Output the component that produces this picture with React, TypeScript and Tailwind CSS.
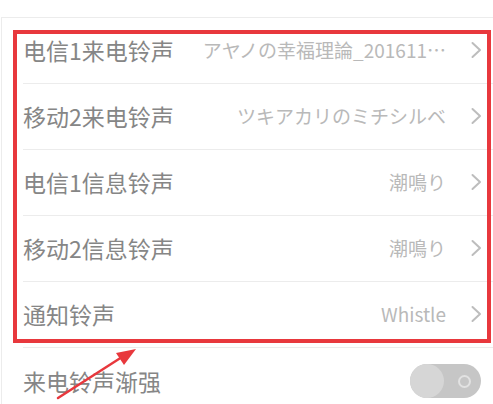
import React from "react";

const rows = [
    { label: "电信1来电铃声", value: "アヤノの幸福理論_201611…" },
    { label: "移动2来电铃声", value: "ツキアカリのミチシルベ" },
    { label: "电信1信息铃声", value: "潮鳴り" },
    { label: "移动2信息铃声", value: "潮鳴り" },
    { label: "通知铃声", value: "Whistle" },
];

const Chevron = () => (
    <svg width="13" height="18" viewBox="0 0 13 18" className="shrink-0 -mt-[2px]">
        <polyline points="2.5,2 10,9 2.5,16" fill="none" stroke="#bdbdbd" strokeWidth="2" strokeLinecap="round" strokeLinejoin="round" />
    </svg>
);

export default function App() {
    return (
        <div className="relative w-[493px] h-[404px] overflow-hidden bg-white font-['Noto_Sans_CJK_SC',sans-serif]">
            <div className="pt-[17px]">
                <div className="border-t border-l border-[#ececec] ml-[1px]">
                    {rows.map((r, i) => (
                        <div key={i} className="h-[66px] pl-[21px]">
                            <div className="h-full flex items-center border-b border-[#ececec] pr-[10px]">
                                <span className="text-[23px] text-[#868686] whitespace-nowrap">{r.label}</span>
                                <span className="flex-1 text-right text-[19px] text-[#b9b9b9] whitespace-nowrap pr-[24px] pl-[18px] truncate">
                                    {r.value}
                                </span>
                                <Chevron />
                            </div>
                        </div>
                    ))}
                    <div className="h-[66px] pl-[21px] flex items-center pr-[12px]">
                        <span className="text-[23px] text-[#868686] whitespace-nowrap flex-1">来电铃声渐强</span>
                        {/* toggle (off) */}
                        <div className="w-[71px] h-[34px] rounded-full bg-[#c6c6c6] flex items-center justify-between">
                            <div className="w-[34px] h-[34px] rounded-full bg-[#d6d6d6]" />
                            <div className="w-[13px] h-[13px] rounded-full border-2 border-[#e2e2e2] mr-[10px]" />
                        </div>
                    </div>
                </div>
            </div>

            {/* annotation: red box */}
            <div className="absolute left-[13px] top-[30px] w-[478px] h-[313px] border-4 border-[#e8383d]" />

            {/* annotation: arrow */}
            <svg className="absolute left-0 top-0" width="493" height="404" viewBox="0 0 493 404">
                <line x1="58" y1="398" x2="122" y2="357" stroke="#e8383d" strokeWidth="2.5" strokeLinecap="round" />
                <polygon points="136,349 116,353 124,365" fill="#e8383d" />
            </svg>
        </div>
    );
}
